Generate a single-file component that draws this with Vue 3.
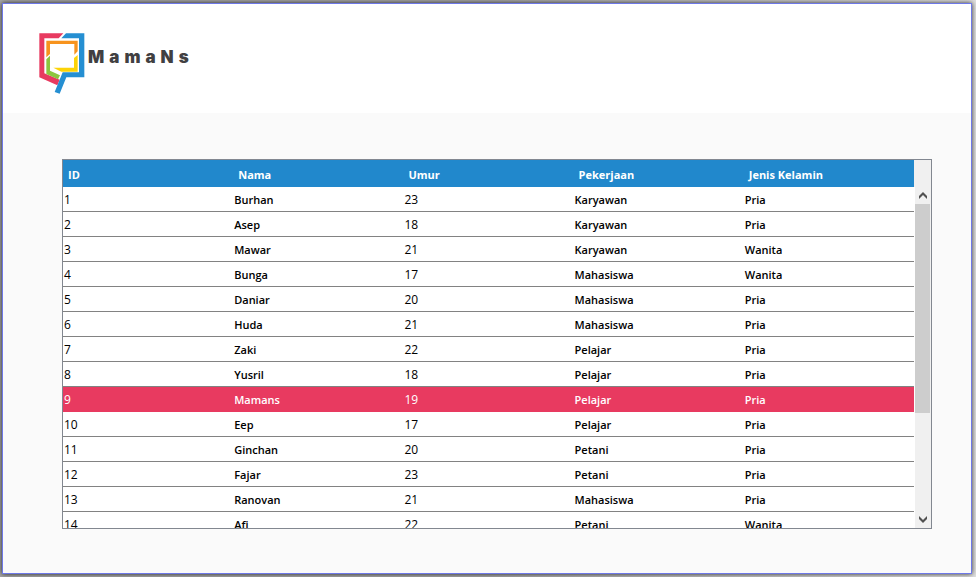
<script setup>
import { ref } from 'vue'

const columns = ['ID', 'Nama', 'Umur', 'Pekerjaan', 'Jenis Kelamin']
const rows = [
  [1, 'Burhan', 23, 'Karyawan', 'Pria'],
  [2, 'Asep', 18, 'Karyawan', 'Pria'],
  [3, 'Mawar', 21, 'Karyawan', 'Wanita'],
  [4, 'Bunga', 17, 'Mahasiswa', 'Wanita'],
  [5, 'Daniar', 20, 'Mahasiswa', 'Pria'],
  [6, 'Huda', 21, 'Mahasiswa', 'Pria'],
  [7, 'Zaki', 22, 'Pelajar', 'Pria'],
  [8, 'Yusril', 18, 'Pelajar', 'Pria'],
  [9, 'Mamans', 19, 'Pelajar', 'Pria'],
  [10, 'Eep', 17, 'Pelajar', 'Pria'],
  [11, 'Ginchan', 20, 'Petani', 'Pria'],
  [12, 'Fajar', 23, 'Petani', 'Pria'],
  [13, 'Ranovan', 21, 'Mahasiswa', 'Pria'],
  [14, 'Afi', 22, 'Petani', 'Wanita'],
]
const selected = ref(9)
const list = ref(null)
const scroll = (step) => list.value?.scrollBy(0, step)
</script>

<template>
  <div class="desktop">
    <div class="window">
      <header class="brand">
        <svg class="logo" viewBox="0 0 150 198" aria-hidden="true">
          <path fill="#e83a60" d="M10 10H82L68 25H25V130L71 149L64 166L10 142Z" />
          <path fill="#258fd2" d="M90 10H145V142H91L71 191L56 186L80 127H129V25H76Z" />
          <path fill="#f7931e" d="M31 32H125V64L115 74V42H42V72L31 82Z" />
          <path fill="#8cc63f" d="M31 88L42 77V122L72 136L66 148L31 132Z" />
          <path fill="#fcd307" d="M52 113H114V84L125 75V125H76Z" />
        </svg>
        <span class="name">MamaNs</span>
      </header>
      <main class="content">
        <div class="panel">
          <div ref="list" class="list">
            <table>
              <thead>
                <tr>
                  <th v-for="c in columns" :key="c" scope="col">{{ c }}</th>
                </tr>
              </thead>
              <tbody>
                <tr
                  v-for="row in rows"
                  :key="row[0]"
                  :class="{ selected: row[0] === selected }"
                  @click="selected = row[0]"
                >
                  <td v-for="(cell, i) in row" :key="i" :class="{ number: i === 0 || i === 2 }">{{ cell }}</td>
                </tr>
              </tbody>
            </table>
          </div>
          <div class="side">
            <div class="corner"></div>
            <div class="scrollbar">
              <button type="button" aria-label="Scroll up" @click="scroll(-25)">
                <svg viewBox="0 0 8 7" aria-hidden="true"><path d="M0 4L4 0L8 4V7L4 3L0 7Z" /></svg>
              </button>
              <div class="track"><div class="thumb"></div></div>
              <button type="button" aria-label="Scroll down" @click="scroll(25)">
                <svg viewBox="0 0 8 7" aria-hidden="true"><path d="M0 0L4 4L8 0V3L4 7L0 3Z" /></svg>
              </button>
            </div>
          </div>
        </div>
      </main>
    </div>
  </div>
</template>

<style>
body {
  background: #b4b4b4;
}
</style>

<style scoped>
* {
  box-sizing: border-box;
}
.desktop {
  display: flex;
  min-height: 100vh;
  padding: 3px 4px 3px 2px;
  overflow: hidden;
  background: linear-gradient(90deg, #a8a8a8 50%, #e0e0e0);
  font-family: "Open Sans", "Noto Sans", sans-serif;
}
.window {
  display: flex;
  flex: 1;
  flex-direction: column;
  border: 1px solid #6d78e8;
  background: #fafafa;
  box-shadow: 0 0 5px rgba(0, 0, 0, 0.8);
}
.brand {
  display: flex;
  align-items: center;
  height: 109px;
  padding: 9px 33px 0;
  background: #fff;
}
.logo {
  width: 50px;
  height: 66px;
}
.name {
  padding: 0 0 12px 2px;
  color: #414042;
  font-family: Inter, "Open Sans", sans-serif;
  font-size: 17px;
  font-weight: 900;
  letter-spacing: 5px;
}
.content {
  display: flex;
  flex: 1;
  padding: 46px 39px 44px 59px;
}
.panel {
  display: flex;
  flex: 1;
  height: 370px;
  border: 1px solid #828790;
  background: #fff;
}
.list {
  flex: 1;
  overflow: hidden;
}
table {
  width: 100%;
  border-collapse: separate;
  border-spacing: 0;
  table-layout: fixed;
}
th {
  height: 27px;
  padding: 3px 0 0 5px;
  background: #2188cc;
  color: #fff;
  font-size: 11px;
  font-weight: 700;
  line-height: 16px;
  text-align: left;
}
td {
  height: 25px;
  padding: 2px 0 0 1px;
  border-bottom: 1px solid #828282;
  color: #000;
  font-size: 11px;
  font-weight: 600;
  line-height: 16px;
}
.number {
  font-size: 12px;
  font-weight: 400;
}
.selected td {
  border-color: #e83a60;
  background: #e83a60;
  color: #fff;
}
.side {
  display: flex;
  flex-direction: column;
  width: 17px;
}
.corner {
  height: 27px;
  background: #f0f0f0;
}
.scrollbar {
  display: flex;
  flex: 1;
  flex-direction: column;
  margin-left: 1px;
  background: #f0f0f0;
}
button {
  display: flex;
  align-items: center;
  justify-content: center;
  width: 15px;
  height: 17px;
  padding: 0;
  border: 0;
  background: transparent;
}
button svg {
  width: 8px;
  height: 7px;
  fill: #505050;
}
.track {
  flex: 1;
}
.thumb {
  width: 15px;
  height: 68%;
  background: #cdcdcd;
}
</style>
